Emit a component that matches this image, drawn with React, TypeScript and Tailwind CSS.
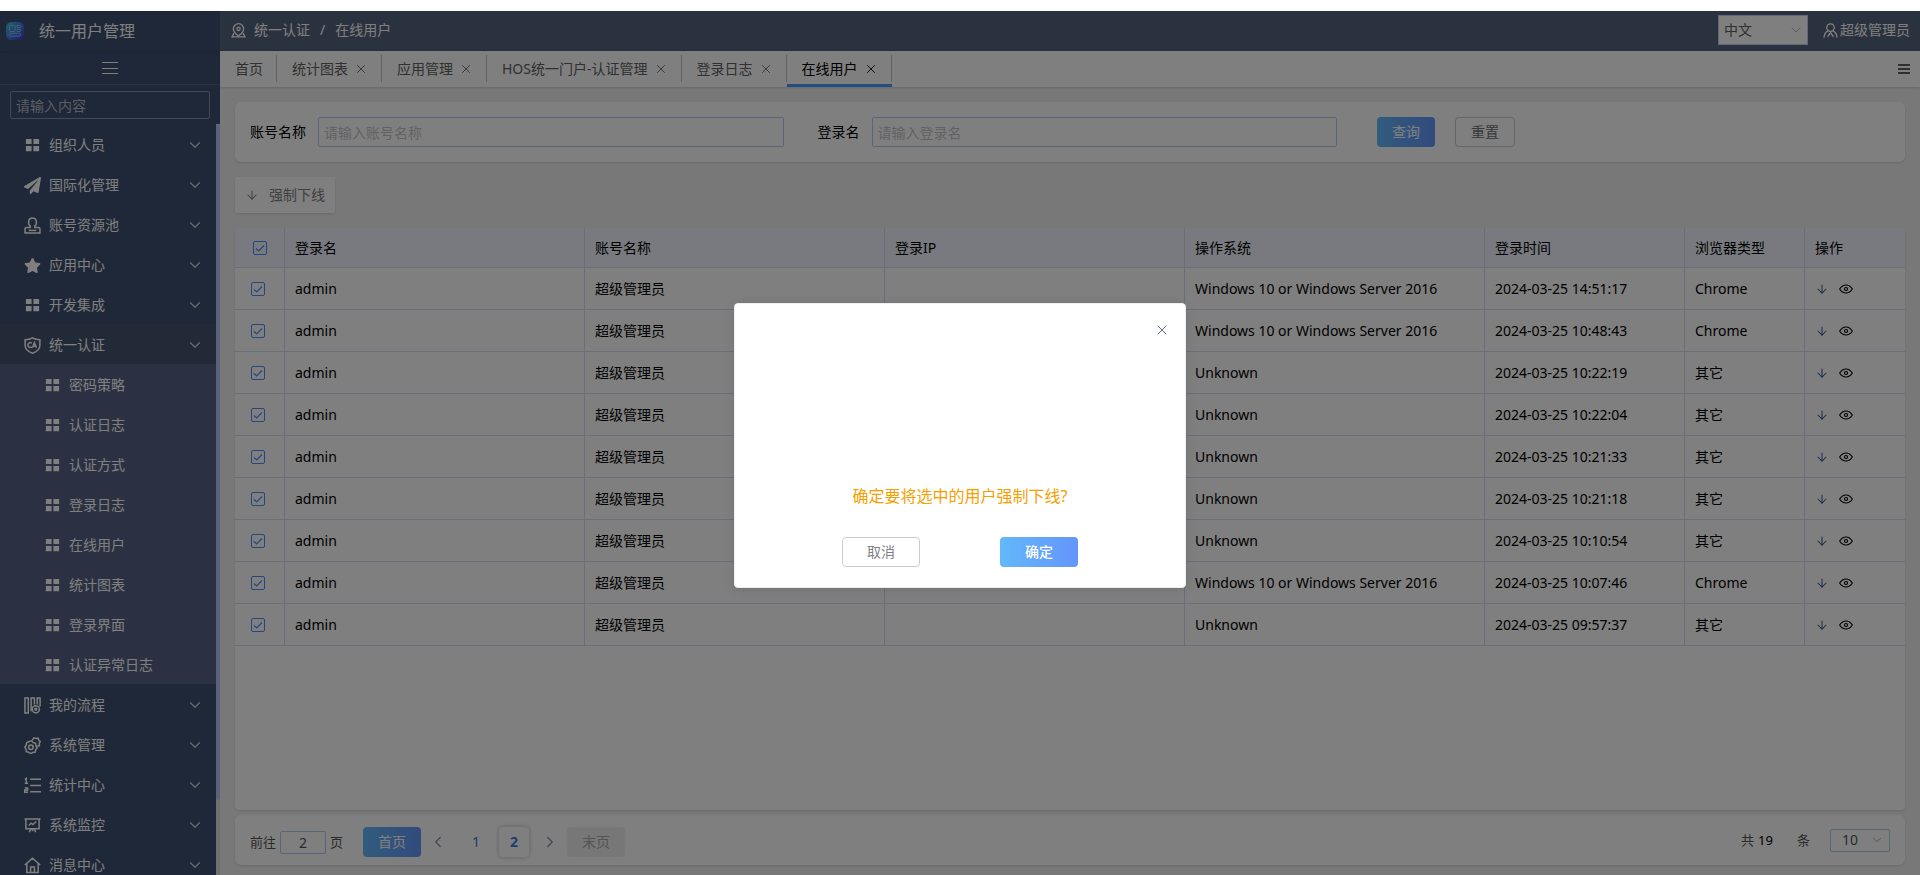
import type { ReactNode } from 'react'
import { ArrowDown, ChevronDown, ChevronLeft, ChevronRight, X } from 'lucide-react'
import { FaPaperPlane, FaStar } from 'react-icons/fa'

type IconProps = { className?: string }

function Line({ className, children }: IconProps & { children: ReactNode }) {
  return (
    <svg viewBox="0 0 18 18" className={className} fill="none" stroke="currentColor" strokeWidth="1.6" aria-hidden="true">
      {children}
    </svg>
  )
}

const GridIcon = ({ className }: IconProps) => (
  <svg viewBox="0 0 18 18" className={className} fill="currentColor" aria-hidden="true">
    <path d="M2 2h6v5.500H2zM10 2h6v5.500h-6zM2 9.500h6V15H2zM10 9.500h6V15h-6z" />
  </svg>
)

const StampIcon = ({ className }: IconProps) => (
  <Line className={className}>
    <path d="M6.600 9.600C4 7.500 4 1 9 1s5 6.500 2.400 8.600V11h4a1.500 1.500 0 0 1 1.500 1.500V17H1.100v-4.500A1.500 1.500 0 0 1 2.600 11h4z" />
    <path d="M5 14.200h8" />
  </Line>
)

const ShieldIcon = ({ className }: IconProps) => (
  <Line className={className}>
    <path d="M9 1c2.500 1.500 5 2 7.800 2v6c0 4-3.500 6.600-7.800 8.200C4.700 15.600 1.200 13 1.200 9V3C4 3 6.500 2.500 9 1z" />
    <path d="M8.200 6.500c-2-1.300-4 0-4 2s2 3.300 4 2M9 11.300l2-5.300 2.200 5.300M9.700 9.600h2.800" />
  </Line>
)

const FlowIcon = ({ className }: IconProps) => (
  <Line className={className}>
    <path d="M1 1h3.500v16H1zM7.500 15V1H11v7M14 8V1h3v9" />
    <circle cx="12.500" cy="13" r="3.800" />
    <circle cx="12.500" cy="13" r="1" />
  </Line>
)

const GearsIcon = ({ className }: IconProps) => (
  <Line className={className}>
    <path d="M5.500 4.800 8.200 4l1.500 2 2.500.6.3 2.600 1.400 2.100-1.500 2.200-.5 2.500-2.700.4-2.100 1.200-2.100-1.500-2.600-.6-.3-2.600L.9 10.800l1.400-2.100.5-2.500z" />
    <circle cx="7.300" cy="10.800" r="2.400" />
    <path d="M8.800 3.300 10.500.9l2.200.7 2.200-.4.800 2.200 1.500 1.500-1 2 .1 2.200-2.300.7" />
  </Line>
)

const ListIcon = ({ className }: IconProps) => (
  <Line className={className}>
    <path d="M6.500 2.500H18M6.500 9H18M6.500 15.500H18M.8 2.500l1.600-1v5M.8 6.500h3.500M.8 11.700h3v2.200h-3v2.300h3.500" />
  </Line>
)

const BoardIcon = ({ className }: IconProps) => (
  <Line className={className}>
    <path d="M.5 2h17M2 2v10.500h14V2M5 9l2.500-2.500L9.500 8 13 4.800M9 12.500V15M7.500 12.500 5.500 16M10.500 12.500l2 3.500" />
  </Line>
)

const HomeIcon = ({ className }: IconProps) => (
  <Line className={className}>
    <path d="M.8 8.500 9 1.300l8.200 7.200M3 7v9.500h12V7M7 16.500V10.500h4v6" />
  </Line>
)

const CrumbIcon = ({ className }: IconProps) => (
  <Line className={className}>
    <path d="M9 15.500C5 12.800 2.800 10.200 2.800 7a6.200 6.200 0 0 1 12.400 0c0 3.200-2.200 5.800-6.200 8.500z" />
    <circle cx="9" cy="7" r="2" />
    <path d="M3.500 12.200 1.200 16.700h15.600l-2.300-4.500" />
  </Line>
)

const UserIcon = ({ className }: IconProps) => (
  <Line className={className}>
    <circle cx="9" cy="5.500" r="4.500" />
    <path d="M6 9.500C3 11 1.500 13.500 1.200 17.500M12 9.500c3 1.500 4.500 4 4.800 8M5.500 16.500 9 11.500l3.500 5" />
  </Line>
)

const EyeIcon = ({ className }: IconProps) => (
  <svg viewBox="0 0 18 18" className={className} fill="none" stroke="currentColor" strokeWidth="1.4" aria-hidden="true">
    <path d="M.8 9C3 5.600 5.800 3.800 9 3.800S15 5.600 17.200 9c-2.200 3.400-5 5.200-8.200 5.200S3 12.400.8 9z" />
    <circle cx="9" cy="9" r="2" />
  </svg>
)

const Logo = () => (
  <svg viewBox="0 0 18 18" className="size-[18px]" fill="none" stroke="#8ccdf5" strokeWidth="0.900" aria-hidden="true">
    <defs>
      <linearGradient id="logo" x1="0" y1="0" x2="1" y2="1">
        <stop offset="0" stopColor="#46c4d8" />
        <stop offset="0.500" stopColor="#3f7fe0" />
        <stop offset="1" stopColor="#4a30c8" />
      </linearGradient>
    </defs>
    <rect width="18" height="18" rx="5.500" fill="url(#logo)" stroke="none" />
    <rect x="3.500" y="3.500" width="5.500" height="6" rx="0.800" />
    <rect x="10.700" y="3.500" width="4" height="2.200" rx="1.100" />
    <rect x="10.700" y="7.300" width="4" height="2.200" rx="1.100" />
    <rect x="3.500" y="11.300" width="11" height="2.800" rx="1" />
  </svg>
)

type MenuItem = { label: string; icon: (p: IconProps) => ReactNode; children?: string[] }

const menu: MenuItem[] = [
  { label: '组织人员', icon: GridIcon },
  { label: '国际化管理', icon: FaPaperPlane },
  { label: '账号资源池', icon: StampIcon },
  { label: '应用中心', icon: FaStar },
  { label: '开发集成', icon: GridIcon },
  {
    label: '统一认证',
    icon: ShieldIcon,
    children: ['密码策略', '认证日志', '认证方式', '登录日志', '在线用户', '统计图表', '登录界面', '认证异常日志'],
  },
  { label: '我的流程', icon: FlowIcon },
  { label: '系统管理', icon: GearsIcon },
  { label: '统计中心', icon: ListIcon },
  { label: '系统监控', icon: BoardIcon },
  { label: '消息中心', icon: HomeIcon },
]

const tabs = ['首页', '统计图表', '应用管理', 'HOS统一门户-认证管理', '登录日志', '在线用户']

const WINDOWS = 'Windows 10 or Windows Server 2016'
const rows = [
  { os: WINDOWS, time: '2024-03-25 14:51:17', browser: 'Chrome' },
  { os: WINDOWS, time: '2024-03-25 10:48:43', browser: 'Chrome' },
  { os: 'Unknown', time: '2024-03-25 10:22:19', browser: '其它' },
  { os: 'Unknown', time: '2024-03-25 10:22:04', browser: '其它' },
  { os: 'Unknown', time: '2024-03-25 10:21:33', browser: '其它' },
  { os: 'Unknown', time: '2024-03-25 10:21:18', browser: '其它' },
  { os: 'Unknown', time: '2024-03-25 10:10:54', browser: '其它' },
  { os: WINDOWS, time: '2024-03-25 10:07:46', browser: 'Chrome' },
  { os: 'Unknown', time: '2024-03-25 09:57:37', browser: '其它' },
]

function Sidebar() {
  return (
    <aside className="flex w-[220px] shrink-0 flex-col bg-[#3e5070] text-white">
      <div className="flex h-10 shrink-0 items-center gap-[15px] px-1.5 text-base shadow-sm">
        <Logo />
        <span>统一用户管理</span>
      </div>
      <button type="button" aria-label="折叠菜单" className="flex h-[34px] shrink-0 items-center justify-center border-b border-[#56647e]">
        <svg viewBox="0 0 16 14" className="h-3.5 w-4" stroke="currentColor" aria-hidden="true">
          <path d="M0 1.500h16M0 7.500h16M0 12.500h16" />
        </svg>
      </button>
      <div className="shrink-0 px-2.5 pt-1.5 pb-[5px]">
        <input
          aria-label="菜单搜索"
          placeholder="请输入内容"
          className="h-7 w-full rounded-xs border border-[#8791a6] px-[5px] placeholder:text-[#b4bac6]"
        />
      </div>
      <div className="flex min-h-0 flex-1">
        <nav className="flex-1 overflow-hidden">
          {menu.map(({ label, icon: Icon, children }) => (
            <div key={label}>
              <a href="#" className={`flex h-10 items-center pt-0.5 pr-3 pl-6 ${children ? 'bg-[#44546f]' : ''}`}>
                <Icon className="mr-2 size-[17px]" />
                <span className="flex-1">{label}</span>
                <ChevronDown className="size-[18px] text-[#d8dce6]" strokeWidth={1.5} />
              </a>
              {children?.map((child) => (
                <a key={child} href="#" className="flex h-10 items-center bg-[#566284] pt-0.5 pl-11">
                  <GridIcon className="mr-2 size-[17px]" />
                  {child}
                </a>
              ))}
            </div>
          ))}
        </nav>
        <div className="w-1 bg-[#dadee6]">
          <div className="h-[90%] rounded-full bg-[#b6c6f8]" />
        </div>
      </div>
    </aside>
  )
}

function Check({ label }: { label: string }) {
  return (
    <label className="relative block size-3.5">
      <input type="checkbox" defaultChecked aria-label={label} className="block size-3.5 appearance-none rounded-xs border border-[#4e8cff]" />
      <svg viewBox="0 0 14 14" className="pointer-events-none absolute inset-0 size-3.5" fill="none" stroke="#4e8cff" strokeWidth="1.2" aria-hidden="true">
        <path d="M3 7.500 5.700 10 11 4.500" />
      </svg>
    </label>
  )
}

const th = 'border-r border-[#d6dcf0] px-2.5 text-left font-normal last:border-r-0'
const td = 'border-r border-[#d6dcf0] px-2.5 last:border-r-0'

function UserTable() {
  return (
    <div className="min-h-0 flex-1 rounded-sm bg-white shadow">
      <table className="w-full table-fixed border-separate border-spacing-0 text-black [&_td]:border-b [&_th]:border-b">
        <colgroup>
          <col className="w-[50px]" />
          <col />
          <col />
          <col />
          <col />
          <col className="w-[200px]" />
          <col className="w-[120px]" />
          <col className="w-[100px]" />
        </colgroup>
        <thead>
          <tr className="h-10 bg-[#f0f4ff]">
            <th className="border-r border-[#d6dcf0] pl-[18px]">
              <Check label="全选" />
            </th>
            <th className={th}>登录名</th>
            <th className={th}>账号名称</th>
            <th className={th}>登录IP</th>
            <th className={th}>操作系统</th>
            <th className={th}>登录时间</th>
            <th className={th}>浏览器类型</th>
            <th className={th}>操作</th>
          </tr>
        </thead>
        <tbody>
          {rows.map((row) => (
            <tr key={row.time} className="h-[42px]">
              <td className="border-r border-[#d6dcf0] pl-4">
                <Check label={row.time} />
              </td>
              <td className={td}>admin</td>
              <td className={td}>超级管理员</td>
              <td className={td} />
              <td className={td}>{row.os}</td>
              <td className={td}>{row.time}</td>
              <td className={td}>{row.browser}</td>
              <td className={td}>
                <div className="flex items-center gap-2.5">
                  <button type="button" aria-label="强制下线" className="text-[#38609a]">
                    <ArrowDown className="size-3.5" strokeWidth={1.8} />
                  </button>
                  <button type="button" aria-label="查看">
                    <EyeIcon className="size-3.5" />
                  </button>
                </div>
              </td>
            </tr>
          ))}
        </tbody>
      </table>
    </div>
  )
}

function Pagination() {
  return (
    <footer className="mt-[5px] flex h-[50px] shrink-0 items-center rounded-md bg-white px-[15px] text-[#555] shadow">
      <div className="flex items-center pt-1">
        <label htmlFor="page" className="text-[13px]">前往</label>
        <input id="page" defaultValue="2" className="mx-1 h-[23px] w-[46px] rounded-xs border border-[#b4c8f0] text-center" />
        <span className="text-[13px]">页</span>
        <button type="button" className="ml-5 h-[30px] w-[58px] rounded bg-linear-to-r from-[#62b8fb] to-[#6495fb] text-white">首页</button>
        <button type="button" aria-label="上一页" className="ml-2 text-[#8c92a4]">
          <ChevronLeft className="size-[18px]" strokeWidth={1.8} />
        </button>
        <button type="button" className="ml-3.5 size-[30px] text-[#3f78d8]">1</button>
        <button type="button" className="ml-2 size-[30px] rounded font-bold text-[#3f78d8] shadow-[0_0_5px_rgba(0,0,0,0.25)]">2</button>
        <button type="button" aria-label="下一页" className="ml-3 text-[#8c92a4]">
          <ChevronRight className="size-[18px]" strokeWidth={1.8} />
        </button>
        <button type="button" disabled className="ml-2 h-[30px] w-[58px] rounded bg-[#eeeeee] text-[#a8a8a8]">末页</button>
      </div>
      <div className="ml-auto flex items-center">
        <span className="text-[13px]">共</span>
        <span className="ml-1 text-[13px] text-black">19</span>
        <span className="ml-6 text-[13px]">条</span>
        <div className="relative ml-5">
          <select aria-label="每页条数" className="h-[23px] w-[60px] appearance-none rounded-xs border border-[#b4c8f0] pl-[11px]">
            <option>10</option>
          </select>
          <ChevronDown className="pointer-events-none absolute top-1 right-1.5 size-3.5 text-[#b0b8cc]" strokeWidth={1.8} />
        </div>
      </div>
    </footer>
  )
}

function ConfirmDialog() {
  return (
    <div className="absolute inset-0 flex items-center justify-center bg-black/50 pt-1">
      <div role="dialog" aria-modal="true" className="flex h-[285px] w-[452px] flex-col rounded border border-[#ebeef5] bg-white shadow-[0_2px_12px_rgba(0,0,0,0.1)]">
        <button type="button" aria-label="关闭" className="mt-[18px] mr-[15px] self-end text-[#5a6a90]">
          <X className="size-4" strokeWidth={1.5} />
        </button>
        <p className="mt-auto text-center text-base text-[#f5a000]">确定要将选中的用户强制下线?</p>
        <div className="mt-[29px] mb-5 flex justify-center gap-20">
          <button type="button" className="h-[30px] w-[78px] rounded border border-[#cccccc] text-[#808088]">取消</button>
          <button type="button" className="h-[30px] w-[78px] rounded bg-linear-to-r from-[#62b8fb] to-[#6495fb] font-medium text-white">确定</button>
        </div>
      </div>
    </div>
  )
}

export default function App() {
  return (
    <div className="h-screen overflow-hidden bg-white pt-[11px] font-['Noto_Sans','Noto_Sans_CJK_SC',sans-serif] text-sm">
      <div className="relative flex h-full">
        <Sidebar />
        <div className="flex min-w-0 flex-1 flex-col bg-[#f1f1f1]">
          <header className="flex h-10 shrink-0 items-center bg-[#56647e] pr-2.5 pb-0.5 pl-[11px] text-white">
            <CrumbIcon className="mr-2 size-[15px]" />
            <a href="#">统一认证</a>
            <span className="mx-2.5">/</span>
            <span>在线用户</span>
            <div className="relative ml-auto">
              <select aria-label="语言" className="h-[30px] w-[90px] appearance-none border border-[#c4d0f0] bg-white pl-[5px] text-[#606060]">
                <option>中文</option>
              </select>
              <ChevronDown className="pointer-events-none absolute top-[7px] right-1 size-4 text-[#b0b8cc]" strokeWidth={1.5} />
            </div>
            <button type="button" className="ml-[15px] flex items-center gap-0.5">
              <UserIcon className="size-[15px]" />
              超级管理员
            </button>
          </header>

          <nav className="flex h-9 shrink-0 items-center bg-white pr-2.5 text-[#606060] shadow">
            {tabs.map((tab, i) => {
              const active = i === tabs.length - 1
              return (
                <div key={tab} className={`flex h-full border-b-3 pt-1 ${active ? 'border-[#409eff] text-black' : 'border-transparent'}`}>
                  <div className="mb-0.5 flex items-center gap-1.5 border-r border-[#c4c4c4] pr-[13px] pl-[15px]">
                    <a href="#">{tab}</a>
                    {i > 0 && (
                      <button type="button" aria-label={`关闭${tab}`}>
                        <X className="size-3.5" strokeWidth={1.5} />
                      </button>
                    )}
                  </div>
                </div>
              )
            })}
            <button type="button" aria-label="标签菜单" className="ml-auto">
              <svg viewBox="0 0 12 10" className="h-2.5 w-3" stroke="currentColor" strokeWidth="2" aria-hidden="true">
                <path d="M0 1h12M0 5h12M0 9h12" />
              </svg>
            </button>
          </nav>

          <main className="flex min-h-0 flex-1 flex-col px-[15px] pt-[15px] pb-2.5">
            <form className="flex h-[60px] shrink-0 items-center rounded-md bg-white px-[15px] text-black shadow">
              <label htmlFor="account" className="mr-3 shrink-0">账号名称</label>
              <input id="account" placeholder="请输入账号名称" className="h-[30px] min-w-0 flex-1 rounded-xs border border-[#b4c8f0] px-[5px] placeholder:text-[#c4c4ca]" />
              <label htmlFor="login" className="mr-3 ml-[34px] shrink-0">登录名</label>
              <input id="login" placeholder="请输入登录名" className="h-[30px] min-w-0 flex-1 rounded-xs border border-[#b4c8f0] px-[5px] placeholder:text-[#c4c4ca]" />
              <button type="button" className="ml-10 h-[30px] w-[58px] rounded bg-linear-to-r from-[#62b8fb] to-[#6495fb] text-white">查询</button>
              <button type="reset" className="mr-[375px] ml-5 h-[30px] w-[60px] rounded border border-[#cccccc] text-[#707078]">重置</button>
            </form>

            <button type="button" className="my-[15px] flex h-9 w-[100px] shrink-0 items-center gap-2.5 rounded-xs bg-white pl-2.5 text-[#808080] shadow">
              <ArrowDown className="size-3.5" strokeWidth={1.8} />
              强制下线
            </button>

            <UserTable />
            <Pagination />
          </main>
        </div>
        <ConfirmDialog />
      </div>
    </div>
  )
}
